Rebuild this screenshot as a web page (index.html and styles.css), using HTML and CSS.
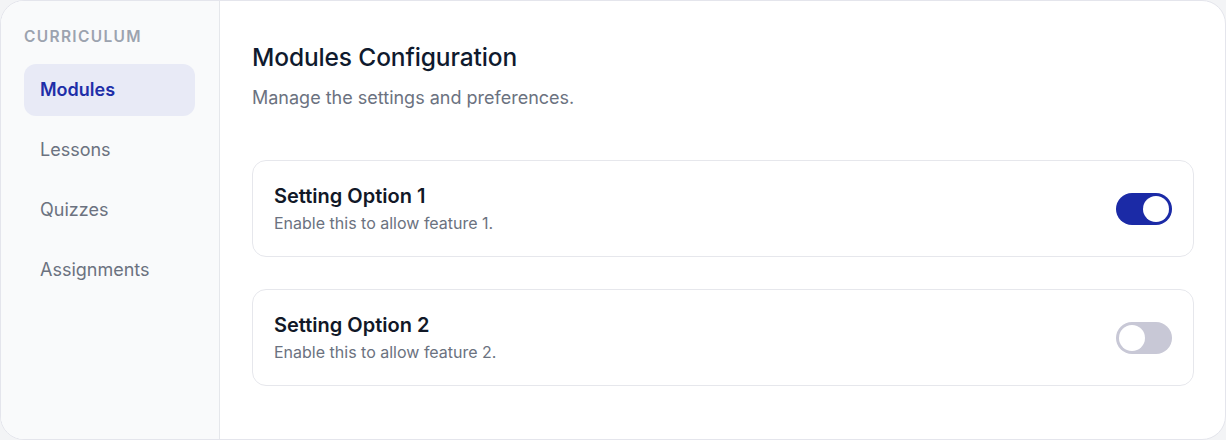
FILE: index.html
```html
<!DOCTYPE html>
<html lang="en">
<head>
<meta charset="utf-8">
<title>Modules Configuration</title>
<link rel="stylesheet" href="styles.css">
</head>
<body>
<div class="shell">
  <aside class="sidebar">
    <div class="side-label">Curriculum</div>
    <nav class="side-nav">
      <a class="side-item active">Modules</a>
      <a class="side-item">Lessons</a>
      <a class="side-item">Quizzes</a>
      <a class="side-item">Assignments</a>
    </nav>
  </aside>
  <main class="main">
    <header class="header">
      <h1 class="title">Modules Configuration</h1>
      <p class="subtitle">Manage the settings and preferences.</p>
    </header>
    <section class="cards">
      <div class="card">
        <div class="card-text">
          <div class="card-title">Setting Option 1</div>
          <div class="card-desc">Enable this to allow feature 1.</div>
        </div>
        <span class="toggle on"><span class="knob"></span></span>
      </div>
      <div class="card">
        <div class="card-text">
          <div class="card-title">Setting Option 2</div>
          <div class="card-desc">Enable this to allow feature 2.</div>
        </div>
        <span class="toggle"><span class="knob"></span></span>
      </div>
    </section>
  </main>
</div>
</body>
</html>
```
FILE: styles.css
```css
* { box-sizing: border-box; }
html, body { margin: 0; padding: 0; }
body {
  background: #f3f4f6;
  font-family: Inter, "Liberation Sans", sans-serif;
  width: 1226px;
  height: 440px;
  overflow: hidden;
}
.shell {
  display: flex;
  width: 1226px;
  height: 440px;
  background: #ffffff;
  border: 1px solid #e4e5ec;
  border-radius: 24px;
  overflow: hidden;
}
.sidebar {
  width: 219px;
  flex: none;
  background: #f9fafb;
  border-right: 1px solid #e5e7eb;
  padding: 26px 24px 24px 23px;
}
.side-label {
  font-size: 15.5px;
  line-height: 20px;
  font-weight: 600;
  letter-spacing: 0.085em;
  text-transform: uppercase;
  color: #9ca3af;
  margin-bottom: 17px;
}
.side-nav {
  display: flex;
  flex-direction: column;
  gap: 8px;
}
.side-item {
  display: flex;
  align-items: center;
  height: 52px;
  padding: 0 16px 1px;
  border-radius: 12px;
  font-size: 18px;
  color: #6b7280;
}
.side-item.active {
  background: #e8eaf6;
  color: #1e2ea8;
  font-weight: 600;
}
.main {
  flex: 1;
  padding: 40px 31px 0 32px;
}
.header { margin-bottom: 49px; }
.title {
  margin: 0;
  font-size: 24.5px;
  line-height: 32px;
  font-weight: 500;
  color: #0f1a2e;
  letter-spacing: -0.005em;
}
.subtitle {
  margin: 12px 0 0;
  font-size: 18px;
  line-height: 26px;
  color: #6b7280;
}
.cards {
  display: flex;
  flex-direction: column;
  gap: 32px;
}
.card {
  display: flex;
  align-items: center;
  justify-content: space-between;
  height: 97px;
  padding: 0 21px;
  border: 1.5px solid #e6e7ec;
  border-radius: 14px;
  background: #fff;
}
.card-title {
  font-size: 20px;
  line-height: 26px;
  font-weight: 600;
  color: #111827;
}
.card-desc {
  margin-top: 3px;
  font-size: 16px;
  line-height: 22px;
  color: #6b7280;
}
.toggle {
  position: relative;
  display: block;
  width: 56px;
  height: 32px;
  border-radius: 16px;
  background: #c8c8d6;
  flex: none;
}
.toggle.on { background: #1b2aa6; }
.knob {
  position: absolute;
  top: 3px;
  left: 3px;
  width: 26px;
  height: 26px;
  border-radius: 50%;
  background: #fff;
}
.toggle.on .knob { left: 27px; }
```
